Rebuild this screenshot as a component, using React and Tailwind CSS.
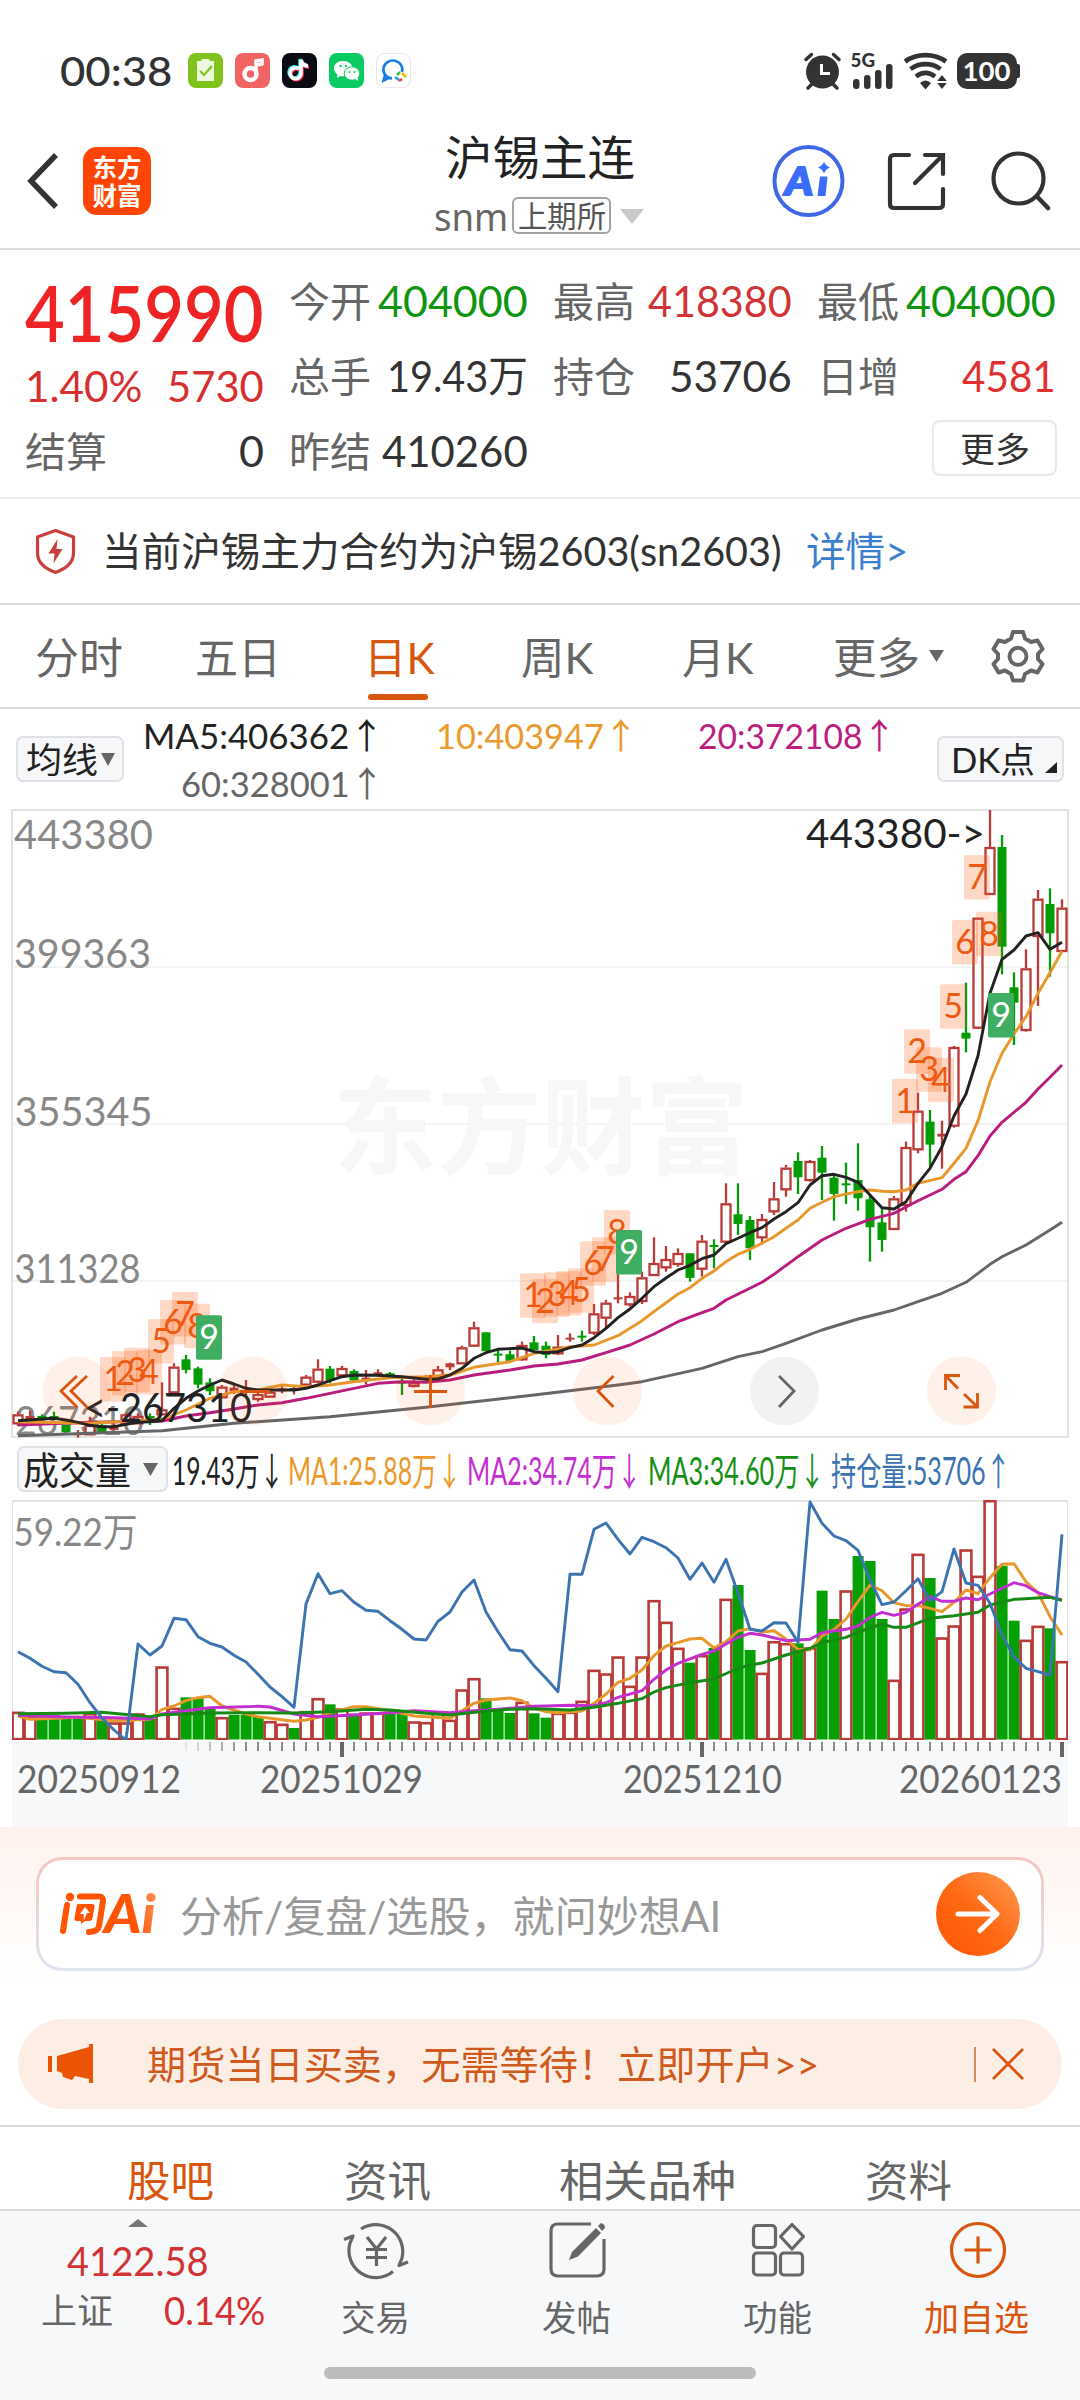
import React, { useLayoutEffect, useRef, useState } from "react";

/* Single-line label squeezed or stretched to a given width. */
function Fit({ w, className = "", children }) {
  const ref = useRef(null);
  const [k, setK] = useState(1);
  useLayoutEffect(() => {
    const n = ref.current.offsetWidth;
    if (n) setK(w / n);
  }, [w]);
  return (
    <span className={"flex shrink-0 items-center whitespace-nowrap " + className} style={{ width: w }}>
      <span ref={ref} className="block origin-left" style={{ transform: `scaleX(${k})` }}>
        {children}
      </span>
    </span>
  );
}

const Up = () => <span className="font-['Noto_Sans_CJK_SC',sans-serif]">↑</span>;
const Down = () => <span className="font-['Noto_Sans_CJK_SC',sans-serif]">↓</span>;

const RED = "#b93a37";
const GREEN = "#049c04";
const cx = (i) => 6 + 12 * i;

/* [up?, high, body top, body bottom, low] in thirds of a pixel, offset by 270px */
const CANDLES = [
  [1, 995, 1003, 1030, 1038], [1, 993, 1008, 1018, 1020], [0, 1003, 1008, 1018, 1020], [0, 995, 1008, 1018, 1020],
  [0, 1035, 1035, 1055, 1055], [1, 1050, 1060, 1064, 1073], [1, 1010, 1035, 1063, 1065], [0, 1030, 1037, 1055, 1055],
  [1, 1030, 1040, 1048, 1050], [1, 1000, 1003, 1030, 1035], [1, 1000, 1008, 1030, 1032], [0, 1000, 1008, 1015, 1035],
  [1, 907, 988, 1003, 1005], [1, 850, 860, 937, 940], [0, 825, 838, 868, 880], [0, 860, 865, 912, 925],
  [0, 895, 907, 932, 945], [1, 915, 920, 952, 952], [1, 915, 923, 932, 942], [1, 900, 930, 937, 945],
  [1, 935, 942, 957, 965], [1, 930, 935, 950, 952], [1, 915, 925, 932, 940], [1, 918, 924, 930, 943],
  [1, 885, 890, 914, 918], [1, 838, 866, 905, 910], [0, 858, 866, 900, 910], [1, 858, 864, 886, 893],
  [0, 868, 873, 900, 905], [1, 870, 893, 897, 913], [1, 868, 877, 881, 890], [0, 876, 880, 888, 890],
  [0, 895, 905, 909, 945], [1, 898, 907, 918, 922], [1, 885, 892, 898, 903], [1, 858, 868, 893, 895],
  [1, 848, 850, 860, 870], [1, 797, 802, 850, 852], [1, 725, 742, 797, 800], [0, 757, 757, 812, 812],
  [0, 812, 821, 825, 847], [0, 812, 823, 841, 847], [1, 785, 795, 838, 842], [0, 768, 787, 808, 815],
  [0, 785, 797, 823, 835], [1, 765, 800, 820, 825], [1, 760, 773, 777, 785], [0, 752, 767, 771, 785],
  [1, 672, 700, 758, 765], [1, 660, 668, 713, 745], [1, 580, 652, 656, 670], [1, 637, 648, 673, 680],
  [1, 575, 592, 663, 672], [1, 472, 549, 585, 585], [1, 498, 537, 562, 575], [1, 505, 519, 552, 560],
  [0, 520, 520, 592, 605], [1, 465, 482, 566, 590], [0, 478, 495, 499, 565], [1, 310, 370, 485, 488],
  [0, 310, 403, 430, 465], [0, 408, 420, 503, 540], [1, 402, 417, 472, 493], [1, 306, 355, 394, 405],
  [1, 255, 263, 328, 350], [0, 217, 243, 290, 342], [1, 240, 243, 300, 305], [0, 198, 233, 276, 360],
  [0, 285, 293, 340, 422], [0, 248, 310, 314, 372], [0, 190, 300, 353, 392], [0, 345, 358, 440, 545],
  [0, 385, 427, 478, 515], [1, 348, 355, 447, 447], [1, 185, 201, 375, 395], [1, 38, 92, 208, 220],
  [0, 90, 125, 192, 260], [1, 122, 161, 168, 266], [1, -102, -99, 137, 143], [0, -292, -142, -126, -83],
  [1, -487, -487, -157, -153], [1, -810, -699, -558, -558], [0, -735, -699, -402, -317], [0, -323, -278, -234, -105],
  [1, -392, -335, -150, -145], [1, -570, -544, -432, -222], [0, -575, -528, -442, -310], [1, -542, -517, -387, -387],
];

const MA5 = [0,1022,3,1015,4,1020,5,1027,6,1036,7,1040,8,1040,9,1033,10,1027,11,1025,12,1022,13,985,14,955,15,933,16,915,17,900,18,912,19,925,20,930,22,930,23,930,24,925,25,915,26,902,27,890,28,885,30,886,32,890,34,898,35,897,36,885,37,865,38,835,39,818,40,808,42,804,43,815,44,818,45,815,46,803,47,795,48,773,49,745,50,713,51,687,52,655,53,620,54,594,55,570,56,556,57,536,58,525,59,491,60,475,61,458,62,443,63,417,64,395,65,368,66,315,67,287,68,283,69,292,70,307,71,345,72,383,73,387,74,365,75,310,76,265,77,200,78,108,79,42,80,-73,81,-260,82,-362,83,-390,84,-432,85,-442,86,-392,87,-413];
const MA10 = [0,1025,6,1030,12,1018,14,990,16,955,18,935,20,930,22,915,24,920,26,915,28,905,31,893,34,890,36,885,38,862,41,845,43,820,45,808,46,800,48,795,50,767,52,722,53,695,55,642,56,623,57,595,58,573,59,545,60,523,61,508,62,490,63,470,64,445,65,420,66,385,67,367,68,350,70,335,71,330,72,334,73,335,74,330,75,310,77,293,78,250,79,205,80,122,81,5,82,-80,83,-138,84,-190,85,-260,86,-322,87,-387];
const MA20 = [0,1035,6,1027,12,1023,14,1008,16,998,18,987,20,975,22,968,24,955,26,940,28,925,30,910,32,905,34,907,36,900,38,885,41,870,43,858,45,852,47,840,49,818,51,795,53,762,55,725,57,698,58,685,59,660,61,625,62,607,63,583,65,530,67,480,69,445,71,418,73,400,75,362,77,328,78,298,79,275,80,227,81,168,82,127,84,67,85,27,86,-8,87,-45];
const MA60 = [0,1067,12,1052,18,1030,26,1010,34,982,43,945,50,915,52,905,57,865,60,830,62,815,64,790,67,750,70,717,73,690,75,665,77,640,79,607,80,580,81,553,82,530,84,495,86,450,87,427];
const priceLine = (a) => {
  const p = [];
  for (let j = 0; j < a.length; j += 2) p.push(`${cx(a[j])},${(a[j + 1] / 3 + 270).toFixed(1)}`);
  return p.join(" ");
};

/* [digit, left, top] of the sequence tags */
const TAGS = [
  ["1", 100, 831], ["2", 112, 813], ["3", 124, 803], ["4", 136, 810], ["5", 148, 717], ["6", 160, 660], ["7", 172, 636], ["8", 184, 671], ["9", 196, 706],
  ["1", 520, 580], ["2", 532, 596], ["3", 544, 577], ["4", 556, 573], ["5", 568, 565], ["6", 580, 484], ["7", 592, 472], ["8", 604, 390], ["9", 616, 450],
  ["1", 892, -4], ["2", 904, -152], ["3", 916, -98], ["4", 928, -67], ["5", 940, -287], ["6", 952, -480], ["7", 964, -675], ["8", 976, -505], ["9", 988, -261],
];

const num = "font-['Lato','Noto_Sans_CJK_SC',sans-serif]";
const FONT = "Lato, 'Noto Sans CJK SC', sans-serif";

function Label({ x, y, w, size = 41, fill = "#888", children }) {
  return (
    <text x={x} y={y} fontSize={size} fill={fill} textLength={w} lengthAdjust="spacingAndGlyphs" fontFamily={FONT}>
      {children}
    </text>
  );
}

function PriceChart() {
  return (
    <svg width="1056" height="628" viewBox="0 0 1056 628" className="block overflow-visible">
      <rect x="0" y="0" width="1056" height="627" fill="none" stroke="#e3e3e3" strokeWidth="2" />
      {[157, 314, 471].map((y) => (
        <line key={y} x1="0" x2="1056" y1={y} y2={y} stroke="#e2e2e2" strokeWidth="1.6" strokeDasharray="1.6 1.6" />
      ))}
      <text x="321" y="356" fontSize="106" fontWeight="700" fill="#f7f7f7" textLength="416" lengthAdjust="spacingAndGlyphs" fontFamily="'Noto Sans CJK SC', sans-serif">东方财富</text>
      <Label x="2" y="38.500" w="139">443380</Label>
      <Label x="2" y="158" w="137">399363</Label>
      <Label x="2.500" y="316" w="138">355345</Label>
      <Label x="2.500" y="472.500" w="126">311328</Label>
      <Label x="3" y="625" w="129">267310</Label>
      {CANDLES.map(([up, h, a, b, l], i) => {
        const y = (v) => v / 3 + 270;
        const c = up ? RED : GREEN;
        const x = cx(i);
        const doji = b - a < 11;
        return (
          <g key={i}>
            <line x1={x} x2={x} y1={y(h)} y2={up && !doji ? y(a) : y(l)} stroke={c} strokeWidth="2.300" />
            {up && !doji && <line x1={x} x2={x} y1={y(b)} y2={y(l)} stroke={c} strokeWidth="2.300" />}
            {up && !doji ? (
              <rect x={x - 4.5} y={y(a) + 1} width="9" height={Math.max((b - a) / 3 - 1, 1)} fill="#fff" stroke={c} strokeWidth="2.300" />
            ) : (
              <rect x={x - 4.5} y={y(a)} width="9" height={(b - a) / 3 + 0.6} fill={c} />
            )}
          </g>
        );
      })}
      <g fill="none" strokeWidth="2.900" strokeLinejoin="round">
        <polyline points={priceLine(MA60)} stroke="#666" />
        <polyline points={priceLine(MA20)} stroke="#b91c7c" />
        <polyline points={priceLine(MA10)} stroke="#e8972b" />
        <polyline points={priceLine(MA5)} stroke="#222" />
      </g>
      {TAGS.map(([d, x, y], i) => {
        const nine = d === "9";
        return (
          <g key={i}>
            <rect x={x - 12} y={y / 3 + 270} width="26" height="44.500" rx="2" fill={nine ? "#3fae62" : "#fd5a10"} fillOpacity={nine ? 1 : 0.24} />
            <text x={x + 1} y={y / 3 + 304} fontSize="34" textAnchor="middle" fill={nine ? "#fff" : "#ee5a10"} fontFamily={FONT}>{d}</text>
          </g>
        );
      })}
      <Label x="794" y="38" w="179" fill="#222">{"443380->"}</Label>
      <Label x="72" y="612" w="168" fill="#222">{"<-267310"}</Label>
      {[65, 241, 418.5, 595.5, 772.5, 949.5].map((x) => (
        <circle key={x} cx={x} cy="581" r="34.500" fill={x === 772.5 ? "#000" : "#fd5a10"} fillOpacity={x === 772.5 ? 0.05 : 0.09} />
      ))}
      <g fill="none" stroke="#d9560f" strokeWidth="2.800">
        <path d="M65 566L49 581L65 597M75 566L59 581L75 597" />
        <path d="M228 581.500H258M402 581.500H435M418.500 565V598" />
        <path d="M601.500 566L586 581L601.500 597" />
        <path d="M933.500 580V565.500H948M934 566L946 578.500M965.500 583V597H951.500M965 596.500L952 584" />
      </g>
      <path d="M767 566L782 581L767 597" fill="none" stroke="#666" strokeWidth="2.800" />
    </svg>
  );
}

/* top of each volume bar; the sign marks direction (negative = down day) */
const VOL = [848,862,-858,-858,-862,-862,852,-868,880,880,853,-870,712,836,-805,-805,-840,864,-858,-858,-862,876,884,-897,846,807,-826,838,-854,850,850,-855,-852,877,879,848,872,781,747,-808,-838,-852,818,-853,-866,851,848,815,722,733,682,770,682,513,578,656,-701,678,-657,509,-468,-663,731,636,642,-643,655,-485,-570,484,-381,-396,-570,752,538,374,-447,625,589,361,440,213,-411,-575,632,590,-598,696];
const POS = [665,685,709,725,728,763,818,864,900,930,642,675,648,565,569,620,640,651,676,696,733,771,800,832,522,431,491,482,517,541,544,572,598,627,630,574,546,486,450,546,605,659,663,707,745,785,433,433,298,279,328,372,322,335,353,384,448,399,457,388,489,598,603,578,579,637,216,280,318,332,361,450,524,516,482,446,512,485,357,459,466,520,615,681,715,725,735,313];
const V1 = [0,858,1,868,5,862,8,872,11,868,12,838,13,828,14,812,15,803,16,799,17,828,18,840,19,852,20,860,23,874,24,870,25,862,26,848,28,830,29,830,31,842,33,858,36,865,37,842,38,820,39,810,41,804,42,812,43,835,44,845,45,848,47,843,48,820,49,792,50,757,51,745,52,720,53,677,54,648,55,638,56,627,57,625,58,654,59,635,60,603,61,596,62,606,63,602,64,627,65,658,66,660,67,618,68,598,69,567,70,515,71,465,72,482,73,518,74,527,75,527,76,535,77,545,78,517,79,480,80,491,81,443,82,403,83,401,84,455,85,488,86,560,87,615];
const V2 = [0,856,4,861,8,863,11,867,12,852,14,842,16,833,20,829,21,831,23,852,25,860,28,855,31,848,33,842,36,848,38,842,40,838,43,829,44,828,46,826,48,827,49,818,50,802,52,782,53,748,54,720,55,700,57,673,58,663,59,642,60,622,61,610,62,615,64,632,66,628,67,608,69,598,70,588,71,562,72,547,73,556,74,547,75,523,76,500,77,514,78,514,79,504,80,509,81,492,83,458,84,467,85,488,86,500,87,510];
const V3 = [0,851,4,850,7,847,11,860,12,854,16,849,20,848,23,849,26,845,29,838,31,840,34,850,36,855,39,843,41,838,43,836,46,840,48,832,50,820,52,806,53,786,54,773,56,758,58,747,60,715,61,705,62,699,64,675,66,655,67,638,69,622,70,606,72,582,73,592,74,592,76,565,78,557,80,547,81,525,83,508,86,502,87,511];
const volLine = (a) => {
  const p = [];
  for (let j = 0; j < a.length; j += 2) p.push(`${cx(a[j])},${((a[j + 1] - 213) / 3 + 1).toFixed(1)}`);
  return p.join(" ");
};

function VolumeChart() {
  return (
    <svg width="1056" height="240" viewBox="0 0 1056 240" className="block">
      <path d="M0 240V1H1056V240" fill="none" stroke="#e3e3e3" strokeWidth="2" />
      <Label x="1.500" y="46" w="124" size={39}>59.22万</Label>
      {VOL.map((v, i) => {
        const y = (Math.abs(v) - 213) / 3;
        return v > 0 ? (
          <rect key={i} x={12 * i + 0.6} y={y + 1.2} width="10.800" height={238 - y} fill="#fff" stroke={RED} strokeWidth="2.600" />
        ) : (
          <rect key={i} x={12 * i + 0.6} y={y} width="11" height={239.500 - y} fill="#04a004" />
        );
      })}
      <g fill="none" strokeWidth="2.900" strokeLinejoin="round">
        <polyline points={volLine(V1)} stroke="#e8972b" />
        <polyline points={volLine(V2)} stroke="#c32fcf" />
        <polyline points={volLine(V3)} stroke="#158a15" />
        <polyline points={volLine(POS.flatMap((v, i) => [i, v]))} stroke="#3b74b0" />
      </g>
    </svg>
  );
}

function DateAxis() {
  return (
    <svg width="1056" height="87" viewBox="0 0 1056 87" className="block bg-[#f7f8fa]">
      <rect width="1056" height="2" fill="#fff" />
      {Array.from({ length: 74 }, (_, j) => {
        const x = 174 + 12 * j;
        const big = x === 330 || x === 690 || x === 1050;
        return <line key={j} x1={x} x2={x} y1="2" y2={big ? 17 : 11} stroke={big ? "#666" : "#888"} strokeWidth={big ? 4 : 2} opacity={Math.min(1, (j + 1) / 6)} />;
      })}
      <g>
        <Label x="5" y="52.500" w="164" size={38} fill="#666">20250912</Label>
        <Label x="248" y="52.500" w="163" size={38} fill="#666">20251029</Label>
        <Label x="611" y="52.500" w="159" size={38} fill="#666">20251210</Label>
        <Label x="887" y="52.500" w="163" size={38} fill="#666">20260123</Label>
      </g>
    </svg>
  );
}

function AppIcons() {
  return (
    <div className="ml-[16px] flex gap-[12px]">
      <svg width="35" height="35" viewBox="0 0 35 35">
        <rect width="35" height="35" rx="8" fill="#7fc31c" />
        <path d="M9 8h4l1-2h7l1 2h4v20H9z" fill="#eef8dd" />
        <path d="M12 18l4 4 8-9" fill="none" stroke="#7fc31c" strokeWidth="2.200" />
      </svg>
      <svg width="35" height="35" viewBox="0 0 35 35">
        <rect width="35" height="35" rx="8" fill="#f26463" />
        <circle cx="15.500" cy="21" r="6" fill="none" stroke="#fff" strokeWidth="4.500" />
        <path d="M21 22V8l6-1v4l-4 1" fill="none" stroke="#fff" strokeWidth="3.500" />
      </svg>
      <svg width="35" height="35" viewBox="0 0 35 35">
        <rect width="35" height="35" rx="8" fill="#0b0b14" />
        <g fill="none" strokeWidth="3.600">
          <path d="M17 16a5.500 5.500 0 1 0 2 5V7c1 4 3 6 7 6" stroke="#25e5e0" transform="translate(-1 -1)" />
          <path d="M17 16a5.500 5.500 0 1 0 2 5V7c1 4 3 6 7 6" stroke="#fa2c55" transform="translate(1 1)" />
          <path d="M17 16a5.500 5.500 0 1 0 2 5V7c1 4 3 6 7 6" stroke="#fff" />
        </g>
      </svg>
      <svg width="35" height="35" viewBox="0 0 35 35">
        <rect width="35" height="35" rx="8" fill="#0acb62" />
        <path d="M14 8c-5 0-9 3-9 7.500 0 2.500 1.500 4.500 3.500 6L8 25l3.500-2 4 .5z" fill="#fff" />
        <ellipse cx="14.500" cy="15.500" rx="9" ry="7.500" fill="#fff" />
        <ellipse cx="23" cy="20.500" rx="7.800" ry="6.700" fill="#fff" stroke="#0acb62" strokeWidth="1" />
        <path d="M25 25l4 3-.5-4z" fill="#fff" />
        <g fill="#0acb62"><circle cx="11.500" cy="13" r="1.200" /><circle cx="17" cy="13" r="1.200" /><circle cx="20.500" cy="19" r="1" /><circle cx="25.500" cy="19" r="1" /></g>
      </svg>
      <svg width="35" height="35" viewBox="0 0 35 35">
        <rect x=".5" y=".5" width="34" height="34" rx="8" fill="#fff" stroke="#e6e6e6" />
        <path d="M26 19a9.500 9 0 1 0-10 6.500M9 22l-1.500 5.500 5-2.500" fill="none" stroke="#1a7fe0" strokeWidth="2.600" />
        <path d="M19 24l4 3" stroke="#1aa0e8" strokeWidth="2.600" />
        <path d="M23 28l3-2" stroke="#f23f2f" strokeWidth="2.600" />
        <path d="M26 20l4 4" stroke="#fbb413" strokeWidth="2.600" />
        <path d="M21 22l3-3" stroke="#3fc24c" strokeWidth="2.600" />
      </svg>
    </div>
  );
}

function StatusBar() {
  return (
    <div className={"flex h-[141px] items-center pl-[60px] pr-[60px] text-[#333] " + num}>
      <Fit w={112} className="text-[41px] font-medium leading-none">00:38</Fit>
      <AppIcons />
      <svg width="220" height="40" viewBox="800 51 220 40" className="ml-auto">
        <g fill="#333" stroke="#333" strokeLinecap="round">
          <circle cx="822.500" cy="72" r="16.500" stroke="none" />
          <path d="M806 59.500l5.500-5M839 59.500l-5.500-5" strokeWidth="3.500" fill="none" />
          <path d="M812 84l-4 4M833 84l4 4" strokeWidth="3.500" />
          <path d="M821.500 64v9.500h8.500" stroke="#fff" strokeWidth="3" fill="none" strokeLinecap="butt" />
        </g>
        <text x="850.500" y="67" fontSize="18" fontWeight="900" fill="#333" textLength="24.500" lengthAdjust="spacingAndGlyphs" fontFamily={FONT}>5G</text>
        <g fill="#333">
          <rect x="853" y="79" width="6.500" height="10" rx="3" />
          <rect x="864" y="75" width="6.500" height="14" rx="3" />
          <rect x="875" y="70" width="6.500" height="19" rx="3" />
          <rect x="886" y="64" width="6.500" height="25" rx="3" />
        </g>
        <g fill="none" stroke="#333" strokeWidth="4.600">
          <path d="M905 61.500c12-8.500 29-8.500 41 0" />
          <path d="M910.500 69c9-6.500 21-6.500 30 0" />
          <path d="M916 76.500c6-4.500 13-4.500 19 0" />
        </g>
        <path d="M920 83q5.500-5 11 0l-5.500 6.500zM942 75l4.800 6h-9.600zM942 89l4.800-6h-9.600z" fill="#333" />
        <rect x="957" y="53" width="60" height="36" rx="10" fill="#333" />
        <rect x="1015" y="64" width="5" height="14" rx="2" fill="#333" />
        <text x="962.500" y="80.500" fontSize="27" fontWeight="700" fill="#fff" textLength="48" lengthAdjust="spacingAndGlyphs" fontFamily={FONT}>100</text>
      </svg>
    </div>
  );
}

function Header() {
  return (
    <header className="flex h-[109px] items-start border-b-2 border-[#dcdcdc] bg-white">
      <svg width="34" height="58" viewBox="0 0 34 58" className="ml-[26px] mt-[11px]">
        <path d="M30 3L5 29L30 55" fill="none" stroke="#333" strokeWidth="5.500" />
      </svg>
      <div className="ml-[23px] mt-[6px] flex h-[68px] w-[68px] flex-col items-center justify-center rounded-[14px] bg-[#ff4505] font-['Noto_Sans_CJK_SC',sans-serif] text-[24.5px] font-bold leading-[28px] text-white">
        <span>东方</span>
        <span>财富</span>
      </div>
      <div className="ml-[281px] w-[216px]">
        <Fit w={190} className={"ml-[13px] mt-[-10px] h-[52px] text-[47px] text-[#222] " + num}>沪锡主连</Fit>
        <div className="ml-[2px] mt-[10px] flex items-center">
          <Fit w={74} className="h-[46px] font-['Noto_Sans',sans-serif] text-[38px] leading-none text-[#666]">snm</Fit>
          <div className="ml-[4px] mt-[-2px] flex h-[37px] w-[99px] items-center justify-center rounded-[6px] border-2 border-[#a3a3a3] text-[#555]">
            <Fit w={88} className={"text-[30px] leading-none " + num}>上期所</Fit>
          </div>
          <svg width="24" height="16" className="ml-[9px]"><path d="M0 1H24L12 16z" fill="#c9c9c9" /></svg>
        </div>
      </div>
      <svg width="288" height="80" viewBox="770 141 288 80" className="ml-[122px]">
        <circle cx="808.500" cy="181" r="34" fill="#fff" stroke="#4068e6" strokeWidth="4" />
        <text x="785" y="194.500" fontSize="38" fontWeight="900" fontStyle="italic" fill="#3b6dfc" stroke="#3b6dfc" strokeWidth="2" textLength="28" lengthAdjust="spacingAndGlyphs" fontFamily={FONT}>A</text>
        <path d="M820 176.500h7.500l-2 19.500h-8zM824 161.500q1.500 4.500 6 6q-4.500 1.500-6 6q-1.500-4.500-6-6q4.500-1.500 6-6z" fill="#3b6dfc" />
        <g fill="none" stroke="#333" strokeWidth="4.200" strokeLinecap="round">
          <path d="M909 155H894q-4 0-4 4V204q0 4 4 4H939q4 0 4-4V189" />
          <path d="M925 155H943V174M942 156L915 183" />
          <circle cx="1018.500" cy="178.500" r="25" />
          <path d="M1037 196.500L1048 208" strokeWidth="4.600" />
        </g>
      </svg>
    </header>
  );
}

function Quote() {
  const lab = "text-[41px] text-[#666]";
  const row = "flex h-[75px] items-center justify-between";
  return (
    <section className={"grid h-[249px] grid-cols-4 gap-[25px] border-b-2 border-[#ececec] pl-[25px] pr-[24px] pt-[14px] " + num}>
      <div>
        <div className="flex h-[82px] items-center pt-[15px]"><Fit w={238} className="text-[76px] font-semibold text-[#ee2424]">415990</Fit></div>
        <div className="flex h-[68px] items-center justify-between pt-[13px]">
          <Fit w={117} className="text-[43px] text-[#d62f2f]">1.40%</Fit>
          <Fit w={97} className="text-[43px] text-[#d62f2f]">5730</Fit>
        </div>
        <div className={row}><Fit w={82} className={lab}>结算</Fit><Fit w={25} className="text-[43px] text-[#333]">0</Fit></div>
      </div>
      <div>
        <div className={row}><Fit w={82} className={lab}>今开</Fit><Fit w={150} className="text-[43px] text-[#109510]">404000</Fit></div>
        <div className={row}><Fit w={82} className={lab}>总手</Fit><Fit w={141} className="text-[43px] text-[#333]">19.43万</Fit></div>
        <div className={row}><Fit w={82} className={lab}>昨结</Fit><Fit w={146} className="text-[43px] text-[#333]">410260</Fit></div>
      </div>
      <div>
        <div className={row}><Fit w={82} className={lab}>最高</Fit><Fit w={144} className="text-[43px] text-[#d03434]">418380</Fit></div>
        <div className={row}><Fit w={82} className={lab}>持仓</Fit><Fit w={123} className="text-[43px] text-[#333]">53706</Fit></div>
      </div>
      <div>
        <div className={row}><Fit w={82} className={lab}>最低</Fit><Fit w={150} className="text-[43px] text-[#109510]">404000</Fit></div>
        <div className={row}><Fit w={82} className={lab}>日增</Fit><Fit w={94} className="text-[43px] text-[#e03030]">4581</Fit></div>
        <div className="ml-auto mr-[-1px] mt-[6px] flex h-[56px] w-[125px] items-center justify-center rounded-[8px] border-2 border-[#e8e8e8]">
          <Fit w={70} className="text-[34px] text-[#333]">更多</Fit>
        </div>
      </div>
    </section>
  );
}

function Notice() {
  return (
    <section className={"flex h-[106px] items-center border-b-2 border-[#d9d9d9] pl-[34px] " + num}>
      <svg width="42" height="46" viewBox="34 527 42 46">
        <path d="M55.500 529.500L73.500 536V552q0 13-18 19.500q-18-6.500-18-19.500V536z" fill="none" stroke="#c93f3c" strokeWidth="3.200" strokeLinejoin="round" />
        <path d="M57.500 538L48.500 552.500H54.500L53.500 562.500L62.500 548H56.500z" fill="#c93f3c" />
      </svg>
      <Fit w={680} className="ml-[26px] text-[40px] text-[#333]">当前沪锡主力合约为沪锡2603(sn2603)</Fit>
      <Fit w={102} className="ml-[24px] text-[40px] text-[#3a7fcb]">详情&gt;</Fit>
    </section>
  );
}

function Tabs() {
  return (
    <nav className={"flex h-[104px] items-center border-b-2 border-[#d9d9d9] pl-[35px] pt-[4px] text-[43px] text-[#666] " + num}>
      <Fit w={88}>分时</Fit>
      <Fit w={86} className="ml-[72px]">五日</Fit>
      <div className="relative ml-[83px] text-[#d9560f]">
        <Fit w={71}>日K</Fit>
        <div className="absolute bottom-[-10px] left-[4px] h-[6px] w-[60px] rounded-full bg-[#d9560f]" />
      </div>
      <Fit w={73} className="ml-[86px]">周K</Fit>
      <Fit w={72} className="ml-[88px]">月K</Fit>
      <Fit w={87} className="ml-[79px]">更多</Fit>
      <svg width="15" height="12" className="mb-[4px] ml-[9px]"><path d="M0 0H15L7.500 12z" fill="#666" /></svg>
      <svg width="54" height="54" viewBox="0 0 54 54" className="mb-[4px] ml-[47px]">
        <path d="M22 3h10l2 6.500 6 3.500 6.500-1.500 5 8.500-4.500 5v5l4.500 5-5 8.500L40 41.500l-6 3.500-2 6.500H22L20 45l-6-3.500L7.500 43.500l-5-8.500L7 30V25L2.500 20l5-8.500L14 13l6-3.500z" fill="none" stroke="#666" strokeWidth="4" strokeLinejoin="round" />
        <circle cx="27" cy="27.300" r="8.500" fill="none" stroke="#666" strokeWidth="4" />
      </svg>
    </nav>
  );
}

function MaRow() {
  return (
    <div className={"flex h-[101px] pl-[16px] text-[35px] leading-none " + num}>
      <div className="mt-[27px] flex h-[46px] w-[108px] items-center rounded-[7px] border-2 border-[#dfe1e6] bg-[#f6f7f9] pl-[8px]">
        <Fit w={72} className="text-[#222]">均线</Fit>
        <svg width="14" height="13" className="ml-[3px]"><path d="M0 0H14L7 13z" fill="#666" /></svg>
      </div>
      <div className="ml-[19px] pt-[1px]">
        <div className="flex h-[48px] items-center">
          <Fit w={241} className="text-[#222]">MA5:406362<Up /></Fit>
          <Fit w={202} className="ml-[52px] text-[#ea992c]">10:403947<Up /></Fit>
          <Fit w={198} className="ml-[60px] text-[#bb1e80]">20:372108<Up /></Fit>
        </div>
        <Fit w={203} className="ml-[38px] h-[48px] text-[#666]">60:328001<Up /></Fit>
      </div>
      <div className="ml-[41px] mt-[27px] flex h-[46px] w-[127px] items-center rounded-[7px] border-2 border-[#dfe1e6] bg-[#f6f7f9] pl-[12px]">
        <Fit w={84} className="text-[#222]">DK点</Fit>
        <svg width="12" height="12" className="ml-[10px] mt-[18px]"><path d="M12 0V11H0z" fill="#222" /></svg>
      </div>
    </div>
  );
}

function VolumeHeader() {
  return (
    <div className={"flex h-[62px] items-center pl-[5px] text-[38px] leading-none " + num}>
      <div className="flex h-[46px] w-[151px] items-center rounded-[7px] border-2 border-[#dfe1e6] bg-[#f6f7f9] pl-[4px]">
        <Fit w={108} className="text-[#222]">成交量</Fit>
        <svg width="15" height="13" className="ml-[12px]"><path d="M0 0H15L7.500 13z" fill="#666" /></svg>
      </div>
      <Fit w={112} className="ml-[4px] text-[#222]">19.43万<Down /></Fit>
      <Fit w={174} className="ml-[4px] text-[#ea992c]">MA1:25.88万<Down /></Fit>
      <Fit w={175} className="ml-[5px] text-[#c32fcf]">MA2:34.74万<Down /></Fit>
      <Fit w={177} className="ml-[6px] text-[#159015]">MA3:34.60万<Down /></Fit>
      <Fit w={180} className="ml-[6px] text-[#3b74b0]">持仓量:53706<Up /></Fit>
    </div>
  );
}

function AskBar() {
  return (
    <section className={"h-[192px] bg-gradient-to-b from-[#fff2ee] to-white to-80% px-[36px] pt-[30px] " + num}>
      <div className="h-[114px] rounded-[26px] bg-gradient-to-b from-[#f6c6bf] to-[#dee5f2] p-[3px]">
        <div className="flex h-full items-center rounded-[23px] bg-white">
          <svg width="102" height="48" viewBox="58 1890 102 48" className="ml-[19px]">
            <defs>
              <linearGradient id="ask" x1="0" x2="1" y1="0.500" y2="0.200">
                <stop offset="0.500" stopColor="#ff5400" />
                <stop offset="1" stopColor="#fd9460" />
              </linearGradient>
            </defs>
            <g fill="none" stroke="#ff5400" strokeWidth="6" strokeLinecap="round" strokeLinejoin="round">
              <path d="M67 1905L63 1931" />
              <path d="M80 1896.500H99Q103.500 1896.500 103 1901L99 1926Q98 1931.500 89 1932" />
            </g>
            <circle cx="70" cy="1897" r="4.200" fill="#ff5400" />
            <path d="M78 1904h14q3 0 2.500 3l-2 11q-.5 3-3.500 3h-4l-4 3v-3h-4q-3 0-2.500-3l2-11q.5-3 1.500-3z" fill="#ff5400" />
            <path d="M85 1907l5 6h-3l-3 7-.500-6h-3.500z" fill="#fff" />
            <text x="104" y="1933" fontSize="53" fontWeight="900" fontStyle="italic" fill="url(#ask)" textLength="52" lengthAdjust="spacingAndGlyphs" fontFamily={FONT}>Ai</text>
          </svg>
          <Fit w={541} className="ml-[20px] pt-[4px] text-[42px] text-[#999]">分析/复盘/选股，就问妙想AI</Fit>
          <div className="ml-auto mr-[21px] flex h-[84px] w-[84px] items-center justify-center rounded-full bg-gradient-to-bl from-[#ff9a4a] via-[#ff6a14] to-[#ff5200]">
            <svg width="46" height="40" viewBox="0 0 46 40" fill="none" stroke="#fff" strokeWidth="5" strokeLinecap="round" strokeLinejoin="round">
              <path d="M3 20H42M25 3.500L42 20L25 36.500" />
            </svg>
          </div>
        </div>
      </div>
    </section>
  );
}

function Banner() {
  return (
    <section className={"mx-[18px] flex h-[90px] items-center rounded-[45px] bg-[#fceee5] text-[#cf5a1c] " + num}>
      <svg width="48" height="42" viewBox="47 2043 48 42" className="ml-[29px]">
        <path d="M48 2056h4v16h-4zM57 2056L89 2047V2044H93V2083H89V2079L75 2076L72 2080L63 2077L62 2073L57 2071z" fill="#ea5404" />
      </svg>
      <Fit w={672} className="ml-[52px] text-[39px]">期货当日买卖，无需等待！立即开户&gt;&gt;</Fit>
      <div className="ml-auto h-[35px] w-[2px] bg-[#d98a5c]" />
      <svg width="32" height="32" className="ml-[16px] mr-[38px]"><path d="M1 1L31 31M31 1L1 31" stroke="#d9560f" strokeWidth="2.800" /></svg>
    </section>
  );
}

function BottomTabs() {
  return (
    <nav className={"mt-[16px] flex h-[86px] items-center border-b-2 border-t-2 border-[#d9d9d9] bg-white pl-[127px] pt-[26px] text-[43px] text-[#666] " + num}>
      <Fit w={87} className="text-[#d9560f]">股吧</Fit>
      <Fit w={87} className="ml-[130px]">资讯</Fit>
      <Fit w={177} className="ml-[128px]">相关品种</Fit>
      <Fit w={87} className="ml-[129px]">资料</Fit>
    </nav>
  );
}

function Action({ label, w, active, children }) {
  return (
    <div className={"flex w-[201px] shrink-0 flex-col items-center pt-[8px] " + (active ? "text-[#d9560f]" : "text-[#666]")}>
      <svg width="68" height="62" viewBox="0 0 68 62" fill="none" stroke="currentColor" strokeWidth="3.200">{children}</svg>
      <Fit w={w} className="mt-[11px] h-[50px] text-[35px]">{label}</Fit>
    </div>
  );
}

function BottomBar() {
  return (
    <footer className={"flex h-[189px] flex-col bg-[#f7f8fa] " + num}>
      <div className="flex h-[154px]">
        <div className="flex w-[275px] shrink-0 flex-col items-center pt-[8px]">
          <svg width="20" height="8"><path d="M0 8H20L10 0z" fill="#777" /></svg>
          <Fit w={142} className="mt-[9px] h-[50px] text-[40px] text-[#d03434]">4122.58</Fit>
          <div className="flex h-[48px] w-[275px] items-center">
            <Fit w={72} className="ml-[41px] text-[35px] text-[#666]">上证</Fit>
            <Fit w={101} className="ml-[51px] text-[39px] text-[#d62f2f]">0.14%</Fit>
          </div>
        </div>
        <Action label="交易" w={69}>
          <path d="M19 10A27 27 0 0 1 60 39L57 46.500L66 43M51 52.500A27 27 0 0 1 8 24L11 17L2 20.500" strokeLinejoin="round" />
          <path d="M25 18L34.500 30L44 18M24 30.500H45M24 38.500H45M34.500 30V47" />
        </Action>
        <Action label="发帖" w={69}>
          <path d="M48 5H15q-7 0-7 7V50q0 7 7 7H54q7 0 7-7V20" />
          <path d="M26 41l3-8L53 9l5 5L35 37.500z" fill="currentColor" stroke="none" />
          <path d="M55 7l3-3q4 1 4 5l-3 3z" fill="currentColor" stroke="none" />
        </Action>
        <Action label="功能" w={69}>
          <rect x="9.500" y="6.500" width="22" height="22" rx="3.500" />
          <rect x="9.500" y="34" width="22" height="22" rx="3.500" />
          <rect x="36.500" y="34" width="22" height="22" rx="3.500" />
          <path d="M48 5.500L59.500 17.500L48 30L36.500 17.500z" strokeLinejoin="round" />
        </Action>
        <div className="ml-[-2px]">
          <Action label="加自选" w={105} active>
            <circle cx="35" cy="31" r="26.500" />
            <path d="M21.500 31H48.500M35 17.500V44.500" />
          </Action>
        </div>
      </div>
      <div className="mx-auto mt-[2px] h-[12px] w-[432px] rounded-full bg-[#bbbcbe]" />
    </footer>
  );
}

export default function App() {
  return (
    <div className="h-[2400px] w-[1080px] overflow-hidden bg-white">
      <StatusBar />
      <Header />
      <Quote />
      <Notice />
      <Tabs />
      <MaRow />
      <div className="mx-[12px]">
        <PriceChart />
        <VolumeHeader />
        <VolumeChart />
        <DateAxis />
      </div>
      <AskBar />
      <Banner />
      <BottomTabs />
      <BottomBar />
    </div>
  );
}
